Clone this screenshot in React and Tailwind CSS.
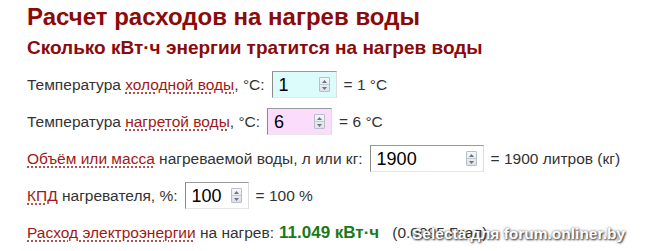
import React from 'react';

function Spinner() {
    return (
        <div className="flex flex-col w-[11px] h-[15px] border border-[#b8bfc8] bg-gradient-to-b from-[#f4f6f8] to-[#dde2e8] rounded-[1px]">
            <div className="flex-1 flex items-center justify-center border-b border-[#c3c9d0]">
                <svg width="5" height="3" viewBox="0 0 5 3"><path d="M0 3 L2.5 0 L5 3 Z" fill="#6b7480" /></svg>
            </div>
            <div className="flex-1 flex items-center justify-center">
                <svg width="5" height="3" viewBox="0 0 5 3"><path d="M0 0 L2.5 3 L5 0 Z" fill="#6b7480" /></svg>
            </div>
        </div>
    );
}

function NumField({ value, width, bg }) {
    return (
        <div
            className={`flex items-center justify-between h-[27px] pl-[6px] pr-[6px] border border-t-[#9a9a9a] border-l-[#8a8a8a] border-r-[#dcdcdc] border-b-[#e6e6e6] ${bg} ${width}`}
        >
            <span className="text-[18px] text-black leading-none">{value}</span>
            <Spinner />
        </div>
    );
}

function Term({ children }) {
    return (
        <span className="text-[#a01818] underline decoration-dotted decoration-[#a01818] underline-offset-[3px]">
            {children}
        </span>
    );
}

export default function App() {
    return (
        <div className="w-[651px] h-[251px] bg-white overflow-hidden relative font-['Liberation_Sans',Arial,sans-serif] text-[#333] pl-[27px] pt-[2px]">
            {/* Header */}
            <h1 className="text-[24px] font-bold text-[#8b0a0a] leading-[29px]">Расчет расходов на нагрев воды</h1>
            <h2 className="text-[19px] font-bold text-[#8b0a0a] leading-[23px] mt-[5px]">Сколько кВт·ч энергии тратится на нагрев воды</h2>

            {/* Fields */}
            <div className="flex flex-col gap-[10px] mt-[12px] text-[15.5px]">
                <div className="flex items-center gap-[7px]">
                    <span>Температура <Term>холодной воды</Term>, °C:</span>
                    <NumField value="1" width="w-[65px]" bg="bg-[#dcfcfc]" />
                    <span>= 1 °C</span>
                </div>
                <div className="flex items-center gap-[7px]">
                    <span>Температура <Term>нагретой воды</Term>, °C:</span>
                    <NumField value="6" width="w-[65px]" bg="bg-[#fcdcfc]" />
                    <span>= 6 °C</span>
                </div>
                <div className="flex items-center gap-[7px]">
                    <span><Term>Объём или масса</Term> нагреваемой воды, л или кг:</span>
                    <NumField value="1900" width="w-[114px]" bg="bg-white" />
                    <span>= 1900 литров (кг)</span>
                </div>
                <div className="flex items-center gap-[7px]">
                    <span><Term>КПД</Term> нагревателя, %:</span>
                    <NumField value="100" width="w-[64px]" bg="bg-white" />
                    <span>= 100 %</span>
                </div>
                <div className="flex items-center h-[27px]">
                    <span><Term>Расход электроэнергии</Term> на нагрев: </span>
                    <span className="ml-[5px] text-[#1a7a1a] font-bold text-[17px]">11.049 кВт·ч</span>
                    <span className="ml-[13px]">(0.0095 Гкал)</span>
                </div>
            </div>

            {/* Watermark */}
            <div className="absolute left-[412px] top-[222px] text-[15.5px] font-bold text-white [text-shadow:1px_1px_2px_#333,0_0_3px_#666]">
                Selecta для forum.onliner.by
            </div>
        </div>
    );
}
